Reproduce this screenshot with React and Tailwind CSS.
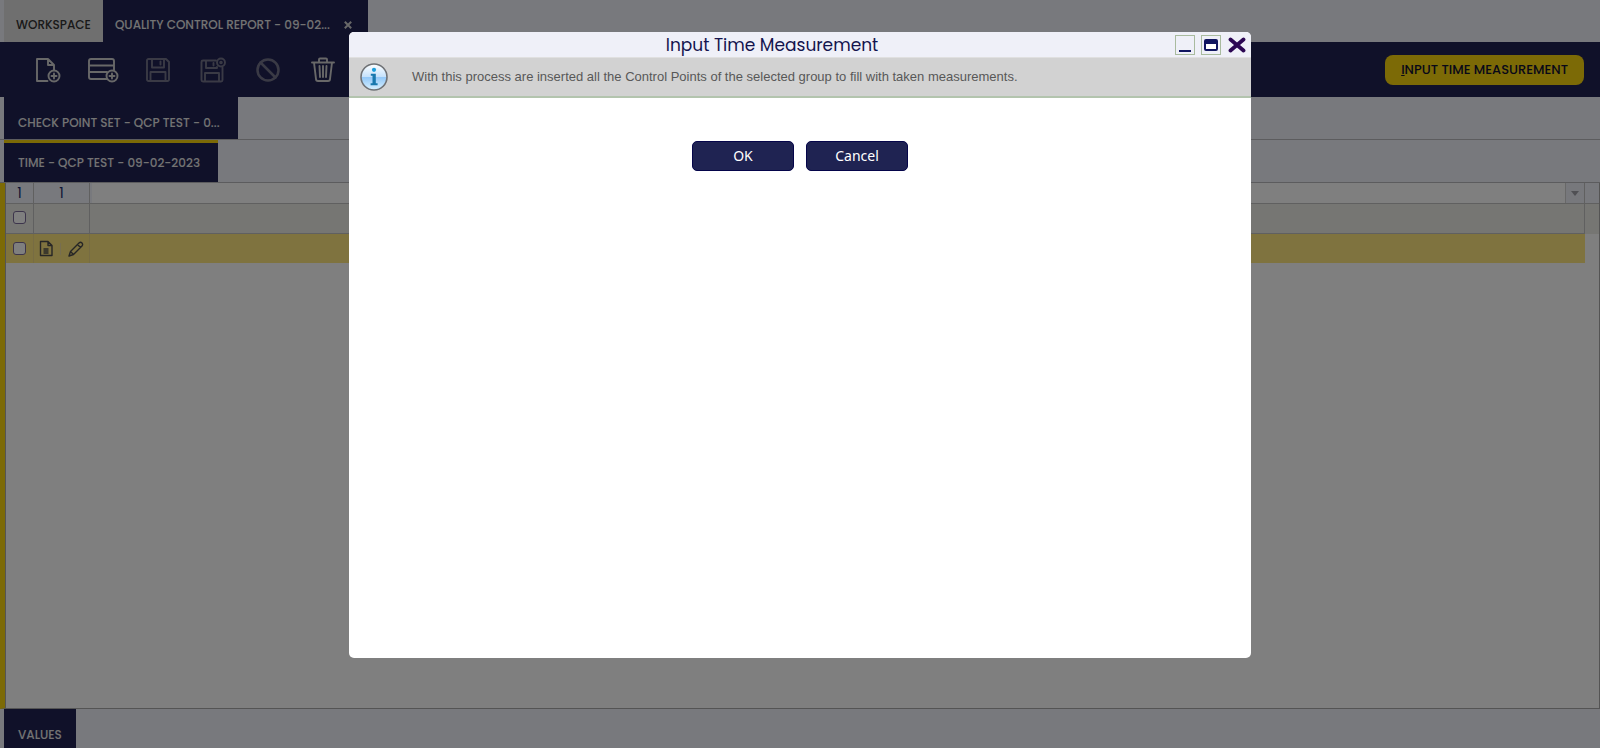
import React from 'react';

const TOOLS = [
  {
    label: 'New record',
    enabled: true,
    art: (
      <>
        <path d="M13.500 25H3V3h11l6 6v5M14 3v6h6" />
        <circle cx="20" cy="20" r="5.5" />
        <path d="M20 17.500v5M17.500 20h5" />
      </>
    ),
  },
  {
    label: 'New row',
    enabled: true,
    wide: true,
    art: (
      <>
        <path d="M20 23H4a2 2 0 0 1-2-2V5a2 2 0 0 1 2-2h21a2 2 0 0 1 2 2v9M2 9.500h25M2 16h18" />
        <circle cx="25" cy="20" r="5.500" />
        <path d="M25 17.500v5M22.500 20h5" />
      </>
    ),
  },
  {
    label: 'Save',
    enabled: false,
    art: <path d="M4.500 3H22l3 3v17.500a1.500 1.500 0 0 1-1.500 1.500h-19A1.500 1.500 0 0 1 3 23.500v-19A1.500 1.500 0 0 1 4.500 3zM8 3v8.500h12V3M16.500 5.500v3M6.500 25v-9h15v9" />,
  },
  {
    label: 'Save and close',
    enabled: false,
    art: (
      <>
        <path d="M17 4.500H4A1.500 1.500 0 0 0 2.500 6v18A1.500 1.500 0 0 0 4 25.500h18a1.500 1.500 0 0 0 1.500-1.500V11.500M7 4.500V12h11v-1M14.500 7v2.500M6 25.500V17h14v8.500" />
        <circle cx="22" cy="6.500" r="4" />
        <circle cx="22" cy="6.500" r="0.800" />
      </>
    ),
  },
  {
    label: 'Undo',
    enabled: false,
    art: (
      <g strokeWidth="2.500">
        <circle cx="14" cy="14" r="10.500" />
        <path d="M6.500 6.500l15 15" />
      </g>
    ),
  },
  {
    label: 'Delete',
    enabled: true,
    art: <path d="M3 6.500h22M10 6V3.500a1 1 0 0 1 1-1h6a1 1 0 0 1 1 1V6M5 6.500l2 16.500a2 2 0 0 0 2 2h10a2 2 0 0 0 2-2l2-16.500M10.500 10l.5 11M14 10v11M17.500 10l-.5 11" />,
  },
];

function ToolIcon({ tool }) {
  return (
    <button
      type="button"
      aria-label={tool.label}
      disabled={!tool.enabled}
      className={`flex h-8 w-8 items-center justify-center ${tool.enabled ? 'text-[#d0d0d0]' : 'text-[#74758a]'}`}
    >
      <svg viewBox={tool.wide ? '0 0 32 28' : '0 0 28 28'} className={tool.wide ? 'h-7 w-8' : 'h-7 w-7'} fill="none" stroke="currentColor" strokeWidth="1.9" strokeLinejoin="round" strokeLinecap="round">
        {tool.art}
      </svg>
    </button>
  );
}

function InfoIcon() {
  return (
    <svg viewBox="0 0 28 28" className="h-7 w-7 shrink-0" aria-hidden="true">
      <defs>
        <linearGradient id="glass" x1="0" y1="0" x2="0" y2="1">
          <stop offset="0" stopColor="#ffffff" />
          <stop offset="0.5" stopColor="#c4e1fb" />
          <stop offset="0.52" stopColor="#93c8f8" />
          <stop offset="1" stopColor="#d9f1ff" />
        </linearGradient>
      </defs>
      <circle cx="14" cy="14" r="13" fill="url(#glass)" stroke="#6f7276" strokeWidth="1.6" />
      <circle cx="14" cy="6.800" r="2.100" fill="#1c9fdc" />
      <path d="M10.800 10.800h5v9.400h1.800v2h-7v-2h1.900v-7.400h-1.700z" fill="#1878ae" />
    </svg>
  );
}

function Tick({ label }) {
  return <input type="checkbox" aria-label={label} className="mx-auto block h-[13px] w-[13px] appearance-none rounded-[3px] border border-[#7a6a98] bg-white" />;
}

function Workspace() {
  return (
    <div className="flex min-h-screen flex-1 flex-col bg-[#f0f2fa]">
      <nav className="flex h-[42px] pl-1 text-[12px] font-medium">
        <a href="#workspace" className="flex items-center bg-[#dedede] px-3 pt-2 text-[#333333]">WORKSPACE</a>
        <div className="flex items-center gap-[10px] bg-[#202253] px-3 pt-2 text-[#e6e6e6]">
          <a href="#report">QUALITY CONTROL REPORT - 09-02...</a>
          <button type="button" aria-label="Close tab" className="flex h-4 w-4 items-center justify-center">
            <svg viewBox="0 0 10 10" className="h-2 w-2" stroke="#d0d0d0" strokeWidth="2.500"><path d="M1 1l8 8M9 1l-8 8" /></svg>
          </button>
        </div>
      </nav>
      <header className="flex h-[55px] items-center justify-between bg-[#202253] pr-4 pl-8">
        <div className="flex gap-[23px]">
          {TOOLS.map((t) => <ToolIcon key={t.label} tool={t} />)}
        </div>
        <button type="button" className="h-[30px] rounded-lg bg-[#f9d40d] px-4 text-[13px] font-medium text-[#101030]">
          <span className="underline">I</span>NPUT TIME MEASUREMENT
        </button>
      </header>
      <nav className="flex h-[43px] border-b border-[#b8b8bc] pl-1 text-[12px] font-medium text-[#e6e6e6]">
        <a href="#set" className="flex items-center bg-[#202253] pt-[10px] pr-[18px] pl-[14px]">CHECK POINT SET - QCP TEST - 0...</a>
      </nav>
      <nav className="flex h-[43px] border-b border-[#b8b8bc] pl-1 text-[12px] font-medium text-[#e6e6e6]">
        <a href="#time" className="flex items-center border-t-[3px] border-[#f9d40d] bg-[#202253] pr-[18px] pl-[14px]">TIME - QCP TEST - 09-02-2023</a>
      </nav>
      <main className="flex flex-1 border-r border-b border-l-[5px] border-r-[#a8a8a8] border-b-[#a8a8a8] border-l-[#f9d40d] bg-white">
        <div className="flex-1 border-l border-[#a8a8a8]">
          <table className="w-full table-fixed border-separate border-spacing-0 text-[14px] text-[#182a6a]">
            <colgroup>
              <col className="w-7" /><col className="w-14" /><col /><col className="w-[14px]" />
            </colgroup>
            <tbody>
              <tr className="h-[21px] bg-[#f1f3fb]">
                <td className="border-r border-b border-[#c0c0c0] p-0 pt-px text-center leading-[19px]">1</td>
                <td className="border-r border-b border-[#c0c0c0] p-0 pt-px text-center leading-[19px]">1</td>
                <td className="border-r border-b border-[#c0c0c0] p-0">
                  <div className="flex h-5 pl-[2px]">
                    <input aria-label="Filter" className="min-w-0 flex-1 bg-white" />
                    <button type="button" aria-label="Open filter" className="flex w-[19px] items-center justify-center border-l border-[#d0d0d0] bg-[#eef0f8]">
                      <svg viewBox="0 0 8 5" className="h-[5px] w-2" fill="#a0a0a8"><path d="M0 0h8L4 5z" /></svg>
                    </button>
                  </div>
                </td>
                <td className="border-b border-[#c0c0c0] p-0" />
              </tr>
              <tr className="h-[30px] bg-[#ecece6]">
                <td className="border-r border-b border-[#c0c0c0] p-0 pb-[2px]"><Tick label="Select all" /></td>
                <td className="border-r border-b border-[#c0c0c0] p-0" />
                <td className="border-r border-b border-[#c0c0c0] p-0" />
                <td className="p-0" />
              </tr>
              <tr className="h-[29px] bg-[#ffe67e]">
                <td className="border-r border-[#efd986] p-0"><Tick label="Select row" /></td>
                <td className="border-r border-[#efd986] p-0">
                  <div className="flex items-center justify-between px-[5px]">
                    <button type="button" aria-label="Open form">
                      <svg viewBox="0 0 14 17" className="h-[17px] w-[14px]" fill="none" stroke="#4c4c4c" strokeWidth="1.400" strokeLinejoin="round"><path d="M1.500 1.500h7.500l4 4v10H1.500zM9 1.500v4h4" /><path d="M4.500 9h5M4.500 11h5M4.500 13h5" strokeWidth="1.500" /></svg>
                    </button>
                    <span className="h-3 w-px bg-[#efdca0]" />
                    <button type="button" aria-label="Edit row">
                      <svg viewBox="0 0 16 16" className="h-4 w-4" fill="none" stroke="#4c4c4c" strokeWidth="1.400" strokeLinejoin="round"><path d="M1 15l1.500-4.500L11 2a2 2 0 0 1 3 3l-8.500 8.500zM9.500 3.500l3 3M2.500 10.500l3 3" /></svg>
                    </button>
                  </div>
                </td>
                <td className="p-0" />
                <td className="bg-white p-0" />
              </tr>
            </tbody>
          </table>
        </div>
      </main>
      <footer className="flex h-[39px] pl-1 text-[12px] font-medium text-[#e6e6e6]">
        <a href="#values" className="flex items-center bg-[#202253] px-[14px] pt-3">VALUES</a>
      </footer>
    </div>
  );
}

function Dialog() {
  return (
    <section role="dialog" aria-label="Input Time Measurement" className="flex w-full max-w-[902px] flex-col overflow-hidden rounded-[5px] bg-white">
      <header className="flex h-[25px] items-center bg-[#eff0f8] pr-1 pl-5">
        <h1 className="flex-1 text-center text-[17px] leading-6 text-[#14144e]">Input Time Measurement</h1>
        <div className="flex items-center gap-[6px]">
          <button type="button" aria-label="Minimize" className="flex h-5 w-5 items-end justify-center border border-[#a9bb9f] pb-[2px]">
            <span className="h-[2px] w-3 bg-[#101560]" />
          </button>
          <button type="button" aria-label="Maximize" className="flex h-5 w-5 items-center justify-center border border-[#a9bb9f]">
            <span className="h-3 w-[14px] rounded-[2px] border-2 border-t-[5px] border-[#101560] bg-white" />
          </button>
          <button type="button" aria-label="Close" className="flex h-5 w-5 items-center justify-center">
            <svg viewBox="0 0 18 16" className="h-4 w-[18px]" stroke="#2c0754" strokeWidth="3.800" strokeLinecap="round"><path d="M2.500 2.500l13 11M15.500 2.500l-13 11" /></svg>
          </button>
        </div>
      </header>
      <div className="flex h-[41px] items-center gap-6 border-t border-b-2 border-t-[#e0e0e0] border-b-[#b3c4ae] bg-[#d2d2d2] pl-[11px] font-['Liberation_Sans',Arial,sans-serif]">
        <InfoIcon />
        <p className="text-[13px] text-[#585858]">With this process are inserted all the Control Points of the selected group to fill with taken measurements.</p>
      </div>
      <div className="flex justify-center gap-3 pt-[43px] font-['Noto_Sans',sans-serif] text-[14px] text-white">
        <button type="button" className="h-[30px] w-[102px] rounded-[5px] border border-[#05054a] bg-[#1f2352] pb-[2px]">OK</button>
        <button type="button" className="h-[30px] w-[102px] rounded-[5px] border border-[#05054a] bg-[#1f2352] pb-[2px]">Cancel</button>
      </div>
    </section>
  );
}

export default function App() {
  return (
    <div className="relative flex min-h-screen font-['Poppins','Inter',sans-serif]">
      <Workspace />
      <div className="absolute inset-0 flex justify-center bg-black/50 pt-8 pb-[90px]">
        <Dialog />
      </div>
    </div>
  );
}
